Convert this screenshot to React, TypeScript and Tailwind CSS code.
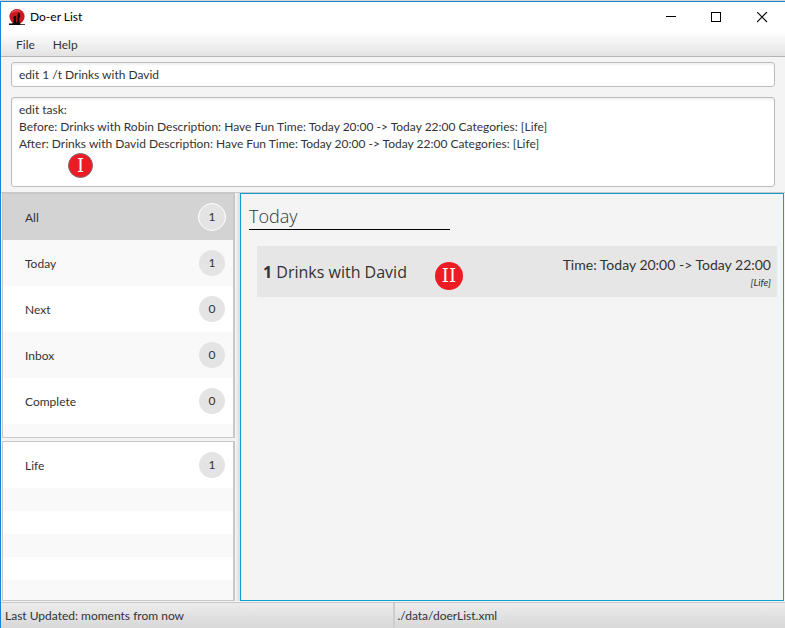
import { useState } from "react";

type Entry = { name: string; count: number };

const views: Entry[] = [
  { name: "All", count: 1 },
  { name: "Today", count: 1 },
  { name: "Next", count: 0 },
  { name: "Inbox", count: 0 },
  { name: "Complete", count: 0 },
];

const categories: Entry[] = [{ name: "Life", count: 1 }];

const result = [
  "edit task:",
  "Before: Drinks with Robin Description: Have Fun Time: Today 20:00 -> Today 22:00 Categories: [Life]",
  "After: Drinks with David Description: Have Fun Time: Today 20:00 -> Today 22:00 Categories: [Life]",
].join("\n");

function AppIcon() {
  return (
    <svg className="h-4 w-4" viewBox="0 0 16 16" aria-hidden="true">
      <circle cx="8" cy="7.6" r="7.6" fill="#c9191e" />
      <path d="M3 3.500Q7 .5 11 2.500" stroke="#e9575a" strokeWidth="1.2" fill="none" />
      <path d="M0 14.600h3l1.500-1.400.3-3.200-.6-1.500 1-1.500 1.200-.2.8 1.300v2.500l-.2 2.500 1 .3.6-2.800-.2-3 .6-3 .8-1 .9 1 .4 2.500-.8 3 .2 2.500 1 2.600H16V16H0z" fill="#130808" />
    </svg>
  );
}

function TitleBar() {
  return (
    <header className="flex h-[30px] items-center bg-white pl-2 text-black">
      <AppIcon />
      <h1 className="ml-[5px] flex-1">Do-er List</h1>
      <button type="button" aria-label="Minimize" className="flex h-full w-[46px] items-center justify-center">
        <svg className="h-[11px] w-[11px]" viewBox="0 0 11 11" shapeRendering="crispEdges">
          <path d="M1 4.500h10" stroke="#000" />
        </svg>
      </button>
      <button type="button" aria-label="Maximize" className="flex h-full w-[46px] items-center justify-center">
        <svg className="h-[11px] w-[11px]" viewBox="0 0 11 11" shapeRendering="crispEdges">
          <path d="M.5.5h9v9h-9z" stroke="#000" fill="none" />
        </svg>
      </button>
      <button type="button" aria-label="Close" className="flex h-full w-[46px] items-center justify-center">
        <svg className="h-[11px] w-[11px]" viewBox="0 0 11 11">
          <path d="M0 0l10 10M10 0L0 10" stroke="#000" strokeWidth="1.1" />
        </svg>
      </button>
    </header>
  );
}

function Row({ entry, shade, selected, onSelect }: { entry: Entry; shade: string; selected: boolean; onSelect?: () => void }) {
  return (
    <li>
      <button
        type="button"
        onClick={onSelect}
        className={`flex h-[46px] w-full items-center justify-between pr-2 pl-[22px] text-left ${selected ? "bg-[#d3d3d3]" : shade}`}
      >
        <span className="pt-px">{entry.name}</span>
        <span
          className={`flex items-center justify-center rounded-full bg-[#e4e4e4] ${
            selected ? "-mr-px h-7 w-7 border border-white" : "h-[26px] w-[26px]"
          }`}
        >
          {entry.count}
        </span>
      </button>
    </li>
  );
}

export default function App() {
  const [view, setView] = useState("All");
  const [command, setCommand] = useState("edit 1 /t Drinks with David");

  return (
    <div className="flex min-h-screen flex-col border-t border-[#d8d4d0] bg-[#f4f4f4] font-['Lato','Noto_Sans',sans-serif] text-xs text-[#333]">
      <div className="flex flex-1 flex-col border-t border-l border-[#1883d7]">
        <TitleBar />
        <nav className="flex h-[25px] items-center gap-[18px] border-b border-[#b5b5b5] bg-linear-to-b from-white to-[#e3e3e3] px-[15px] pt-0.5">
          <button type="button">File</button>
          <button type="button">Help</button>
        </nav>

        <div className="flex flex-col gap-[10px] px-[10px] py-[5px]">
          <input
            type="text"
            aria-label="Command"
            value={command}
            onChange={(e) => setCommand(e.target.value)}
            className="h-[25px] w-full rounded-[3px] border border-[#bdbdbd] bg-white px-[7px] shadow-[inset_0_2px_2px_#f2f2f2] outline-none"
          />
          <div className="relative flex">
            <textarea
              readOnly
              aria-label="Result"
              value={result}
              className="h-[90px] w-full resize-none rounded-[3px] border border-[#bdbdbd] bg-white px-[7px] py-[3px] leading-[17px] shadow-[inset_0_2px_2px_#f2f2f2] outline-none"
            />
            <span className="absolute top-14 left-[57px] flex h-[25px] w-[25px] items-center justify-center rounded-full border border-[#80696b] bg-[#ed1c24] font-['DejaVu_Serif',serif] text-lg leading-none text-white">
              I
            </span>
          </div>
        </div>

        <div className="flex flex-1 border-t border-[#c8c8c8] pr-px pl-px">
          <aside className="flex w-[233px] flex-col gap-[3px]">
            <ul className="h-[245px] overflow-hidden border border-r-2 border-[#c8c8c8] bg-[#f9f9f9]">
              {views.map((entry, i) => (
                <Row
                  key={entry.name}
                  entry={entry}
                  shade={i % 2 ? "bg-[#f9f9f9]" : "bg-white"}
                  selected={view === entry.name}
                  onSelect={() => setView(entry.name)}
                />
              ))}
            </ul>
            <ul className="flex-1 border border-r-2 border-[#c8c8c8] bg-[#f9f9f9]">
              {categories.map((entry) => (
                <Row key={entry.name} entry={entry} shade="bg-white" selected={false} />
              ))}
              <li className="h-[23px]" />
              <li className="h-[23px] bg-white" />
              <li className="h-[23px]" />
              <li className="h-[23px] bg-white" />
            </ul>
          </aside>
          <div className="w-[5px] bg-linear-to-r from-[#f6f6f6] to-[#dcdcdc]" />
          <main className="flex-1 border border-[#0c9dd1] bg-[#f4f4f4] px-2 pt-2.5">
            <h2 className="w-[201px] border-b border-black font-['Open_Sans',sans-serif] text-lg leading-[25px] font-light">Today</h2>
            <article className="mt-4 -mr-0.5 ml-2 flex h-[51px] items-center justify-between bg-[#e6e6e6] px-1.5">
              <div className="flex items-center gap-7">
                <h3 className="font-['Open_Sans',sans-serif] text-base">
                  <b>1</b> Drinks with David
                </h3>
                <span className="mt-2 flex h-7 w-7 items-center justify-center rounded-full bg-[#ed1c24] font-['DejaVu_Serif',serif] text-lg leading-none text-white">
                  II
                </span>
              </div>
              <div className="text-right">
                <p className="text-sm leading-5">Time: Today 20:00 -&gt; Today 22:00</p>
                <p className="text-[10px] leading-[14px] italic">[Life]</p>
              </div>
            </article>
          </main>
        </div>

        <footer className="mt-px flex h-[26px] border-t border-[#c8c8c8] bg-linear-to-b from-[#ececec] to-[#d8d8d8] leading-[26px]">
          <span className="flex-1 pl-1">Last Updated: moments from now</span>
          <span className="flex-1 border-l-2 border-[#cecece] pl-[3px]">./data/doerList.xml</span>
        </footer>
      </div>
    </div>
  );
}
